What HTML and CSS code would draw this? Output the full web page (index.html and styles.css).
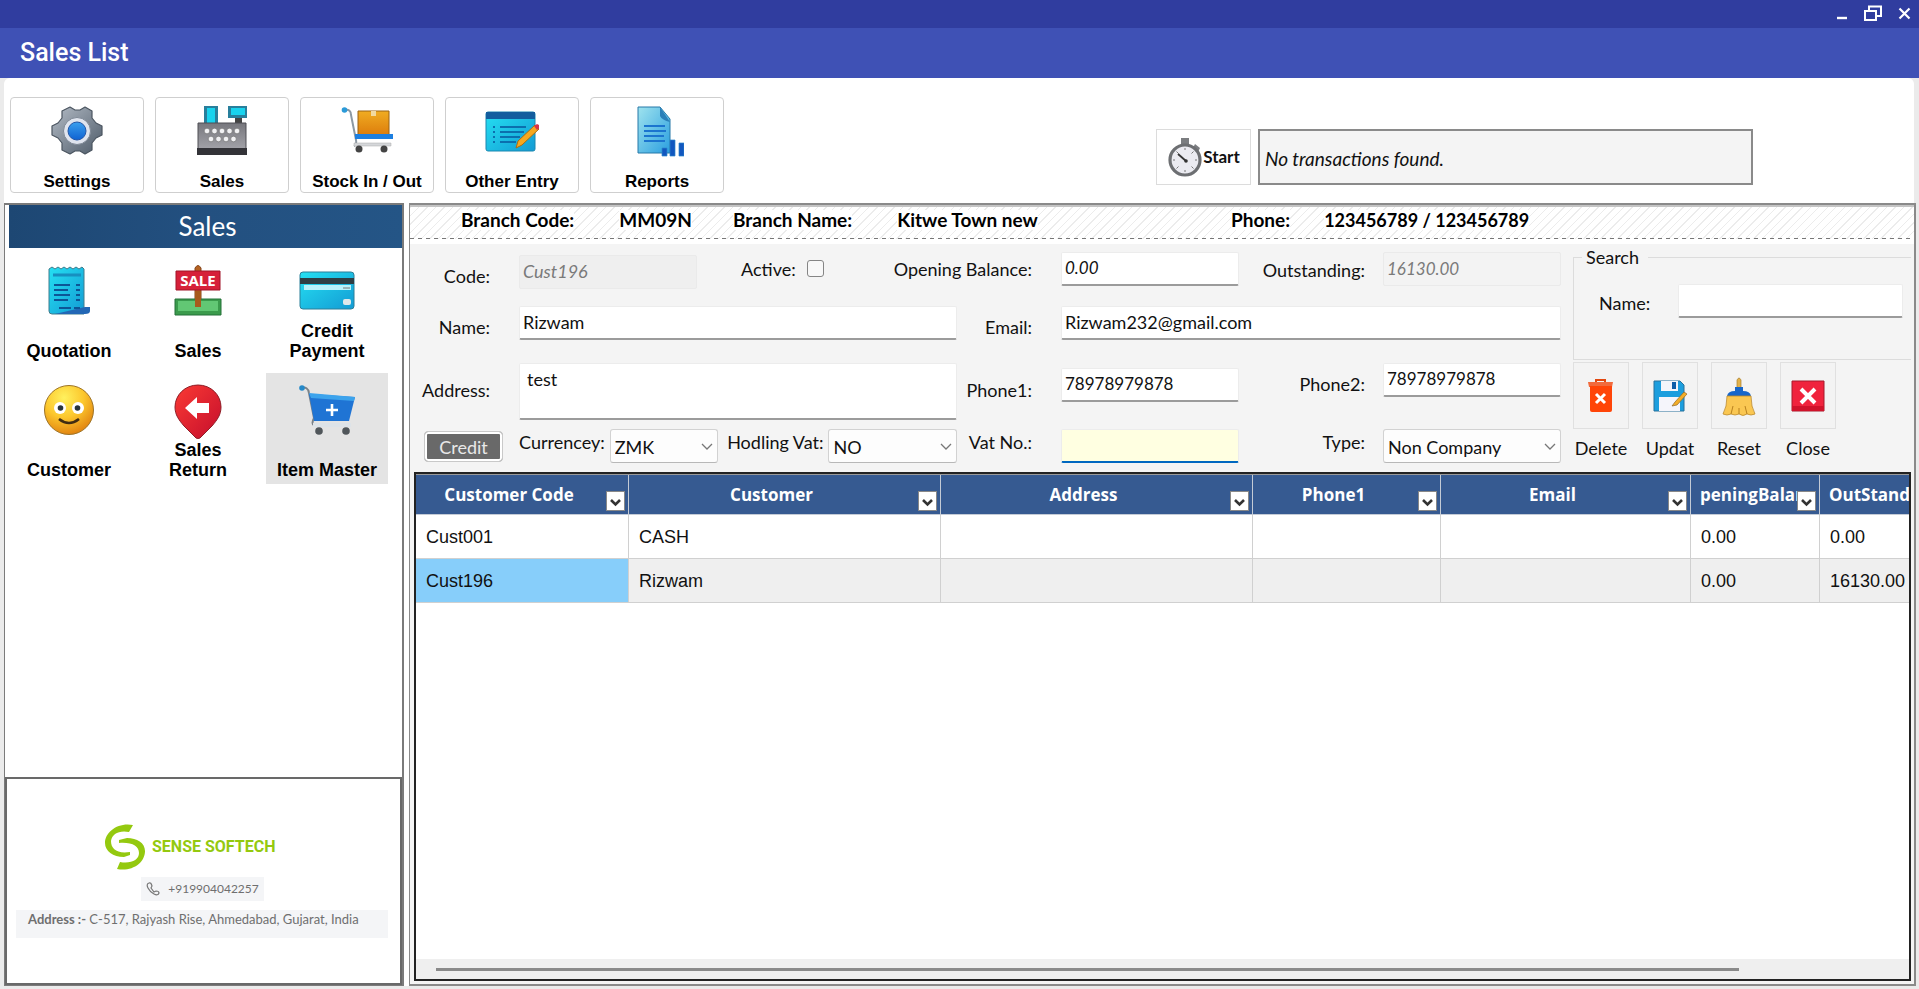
FILE: index.html
```html
<!DOCTYPE html>
<html lang="en">
<head>
<meta charset="utf-8">
<title>Sales List</title>
<link rel="stylesheet" href="styles.css">
</head>
<body>
<svg class="defs" width="0" height="0" aria-hidden="true">
  <defs>
    <linearGradient id="steel" x1="0" y1="0" x2="1" y2="1"><stop offset="0" stop-color="#b4bcc6"/><stop offset="1" stop-color="#4d5a68"/></linearGradient>
    <linearGradient id="till" x1="0" y1="0" x2="0" y2="1"><stop offset="0" stop-color="#77777d"/><stop offset="1" stop-color="#a9a9af"/></linearGradient>
    <linearGradient id="cyan" x1="0" y1="0" x2="1" y2="1"><stop offset="0" stop-color="#25e0f2"/><stop offset="1" stop-color="#139bd4"/></linearGradient>
    <linearGradient id="blue" x1="0" y1="0" x2="0" y2="1"><stop offset="0" stop-color="#3aa0ee"/><stop offset="1" stop-color="#0f62d2"/></linearGradient>
    <linearGradient id="doc" x1="0" y1="0" x2="1" y2="1"><stop offset="0" stop-color="#9fe3ee"/><stop offset="1" stop-color="#2a9fe0"/></linearGradient>
    <linearGradient id="box" x1="0" y1="0" x2="0" y2="1"><stop offset="0" stop-color="#f0ac22"/><stop offset="1" stop-color="#dd7d0c"/></linearGradient>
    <linearGradient id="red" x1="0" y1="0" x2="1" y2="1"><stop offset="0" stop-color="#fb3a34"/><stop offset="1" stop-color="#c40e2c"/></linearGradient>
    <radialGradient id="face" cx=".4" cy=".25" r=".8"><stop offset="0" stop-color="#fff15e"/><stop offset=".5" stop-color="#fcc72d"/><stop offset="1" stop-color="#df7d0d"/></radialGradient>
  </defs>
</svg>

<header class="titlebar">
  <button class="win" type="button" aria-label="Minimize"><svg width="12" height="14" viewBox="0 0 12 14"><path d="M1 12h10" stroke="#fff" stroke-width="2.4"/></svg></button>
  <button class="win" type="button" aria-label="Restore"><svg width="20" height="16" viewBox="0 0 20 16"><path d="M2 6h11v9H2zM6 6V1.5h12V11h-5" fill="none" stroke="#fff" stroke-width="2"/></svg></button>
  <button class="win" type="button" aria-label="Close window"><svg width="13" height="13" viewBox="0 0 13 13"><path d="M1.5 1.5l10 10m0-10l-10 10" stroke="#fff" stroke-width="2.2"/></svg></button>
</header>
<div class="appbar"><h1 class="appbar-title">Sales List</h1></div>

<nav class="toolbar">
  <button class="tool" type="button">
    <svg width="54" height="52" viewBox="0 0 54 52"><g stroke="#4b5560" stroke-width="1.2" stroke-linejoin="round"><path fill="url(#steel)" d="M20 2l5 3h5l5-3 7 4 0 7 4 5 6 3v9l-6 3-4 5 0 7-7 4-5-3h-5l-5 3-8-4 0-7-4-5-6-3v-9l6-3 4-5 0-7z"/></g><circle cx="27" cy="26" r="13.500" fill="#dfe4ee" stroke="#7e8895"/><circle cx="27" cy="26" r="9" fill="url(#blue)" stroke="#2256a8"/></svg>
    <span>Settings</span>
  </button>
  <button class="tool" type="button">
    <svg width="54" height="52" viewBox="0 0 54 52"><path d="M9 1h14v18H9zM33 1h19v12H33z" fill="#287f9c"/><path d="M12 3h8v15h-8zM36 3h14v7H36z" fill="#19d3ee"/><path d="M40 13h7v6h-7z" fill="#444"/><path d="M3 18h48v30H3z" fill="url(#till)" stroke="#4f4f55"/><path d="M2 43h50v7H2z" fill="#333338"/><g fill="#f1f1f3" stroke="#666" stroke-width=".6"><circle cx="12" cy="26" r="2.800"/><circle cx="19.500" cy="26" r="2.800"/><circle cx="27" cy="26" r="2.800"/><circle cx="34.500" cy="26" r="2.800"/><circle cx="42" cy="26" r="2.800"/><circle cx="16" cy="34" r="2.800"/><circle cx="23.500" cy="34" r="2.800"/><circle cx="31" cy="34" r="2.800"/><circle cx="38.500" cy="34" r="2.800"/></g></svg>
    <span>Sales</span>
  </button>
  <button class="tool" type="button">
    <svg width="54" height="52" viewBox="0 0 54 52"><path d="M5 5q6-1 6 5l5 25q1 5-2 6" fill="none" stroke="#8d99a3" stroke-width="2"/><circle cx="4.500" cy="5" r="2.800" fill="#2b9ad8"/><path d="M18 6h31v24H18z" fill="url(#box)" stroke="#9a6212"/><path d="M31 6h5v5h-5z" fill="#f2d9a0"/><path d="M15 29h38v5H15z" fill="#1d7fe0"/><path d="M14 38h37v3H14z" fill="#d5d7da" stroke="#aaa" stroke-width=".5"/><circle cx="19" cy="44" r="3.500" fill="#444"/><circle cx="44" cy="44" r="3.500" fill="#444"/></svg>
    <span>Stock In / Out</span>
  </button>
  <button class="tool" type="button">
    <svg width="54" height="52" viewBox="0 0 54 52"><rect x="1" y="7" width="49" height="39" rx="2" fill="url(#cyan)" stroke="#1a87b0"/><path d="M1 7h49v7H1z" fill="#135d9e"/><path d="M8 22h2m5 0h26M8 27h2m5 0h24M8 32h2m5 0h20M8 37h2m5 0h16" stroke="#0b6fae" stroke-width="2"/><path d="M31 43l2-7 17-16 4 4-17 16z" fill="#f5a81e" stroke="#a86c14"/><path d="M49 21l3-2 2 1 0 3-2 2z" fill="#d8334a"/></svg>
    <span>Other Entry</span>
  </button>
  <button class="tool" type="button">
    <svg width="54" height="52" viewBox="0 0 54 52"><path d="M8 2h22l10 12v34H8z" fill="url(#doc)" stroke="#2779a8"/><path d="M30 2l10 15q-8-2-10-6z" fill="#2b7fb8"/><path d="M14 21h21M14 26h22M14 31h20M14 36h21" stroke="#1b74cf" stroke-width="2.200"/><path d="M32 43h5v8h-5zM40 35h5v16h-5zM49 38h5v13h-5z" fill="#1257bf" stroke="#2b88cd" stroke-width=".7"/></svg>
    <span>Reports</span>
  </button>
  <div class="session">
    <button class="start" type="button">
      <svg width="36" height="40" viewBox="0 0 36 40"><path d="M14 1h8v6h-8zM28 7l5 4-2 4-5-4z" fill="#7b7d80"/><circle cx="18" cy="23" r="15" fill="#ebebf1" stroke="#6d6f72" stroke-width="3.200"/><path d="M18 11v2m0 20v2M6 23h2m20 0h2M9.500 14.500l2 2m13 13l2 2m0-17l-2 2m-13 13l-2 2" stroke="#777"/><path d="M11 17l8 7" stroke="#333" stroke-width="1.800"/><circle cx="19" cy="24" r="1.800" fill="#333"/></svg>
      <span>Start</span>
    </button>
    <input class="status" type="text" value="No transactions found." aria-label="Transaction status" readonly>
  </div>
</nav>

<div class="workspace">
  <aside class="sidebar">
    <h2 class="sidebar-title">Sales</h2>
    <nav class="tiles">
      <button class="tile" type="button">
        <svg width="48" height="52" viewBox="0 0 48 52"><path d="M4 4l3-2 3 2 3-2 3 2 3-2 3 2 3-2 3 2 3-2 3 2 3-2 2 2v45H7q-3 0-3-3z" fill="url(#cyan)" stroke="#3f7c8c"/><path d="M40 42h5v4q0 3-5 3H10" fill="#2367b5"/><path d="M8 10h28" stroke="#178fc0" stroke-width="3"/><path d="M9 20h16M31 20h4M9 25h14M31 25h4M9 30h16M31 30h4M9 35h14M31 35h4M14 43h12M29 43h6" stroke="#0c5596" stroke-width="2"/></svg>
        <span>Quotation</span>
      </button>
      <button class="tile" type="button">
        <svg width="48" height="52" viewBox="0 0 48 52"><path d="M21 3q3-5 6 0v40h-6z" fill="#b66322" stroke="#85451a"/><path d="M1 34h46v16H1z" fill="#3b9b4c" stroke="#257038"/><path d="M4 36h40v10H4z" fill="#62c774"/><path d="M21 26h6v16h-6z" fill="#a75a1c"/><path d="M2 6h44v19H2z" fill="#d62039" stroke="#a11528"/><text x="24" y="21" class="sale-sign">SALE</text></svg>
        <span>Sales</span>
      </button>
      <button class="tile" type="button">
        <svg width="60" height="52" viewBox="0 0 60 52"><rect x="3" y="7" width="54" height="37" rx="3" fill="url(#cyan)" stroke="#2a7e98"/><path d="M3 13h54v6H3z" fill="#2e3e44"/><path d="M7 20h47v5H7z" fill="#b9f1fa"/><path d="M46 23h7" stroke="#777"/><rect x="46" y="34" width="8" height="6" rx="2" fill="#dfe8ea"/></svg>
        <span>Credit Payment</span>
      </button>
      <button class="tile" type="button">
        <svg width="52" height="52" viewBox="0 0 52 52"><circle cx="26" cy="26" r="24.500" fill="url(#face)" stroke="#9d7428"/><circle cx="17" cy="24" r="6" fill="#fff"/><circle cx="35" cy="24" r="6" fill="#fff"/><circle cx="17.500" cy="24" r="2.800" fill="#28343c"/><circle cx="34.500" cy="24" r="2.800" fill="#28343c"/><path d="M16 35q10 8 20 0" fill="none" stroke="#402c12" stroke-width="2.600"/></svg>
        <span>Customer</span>
      </button>
      <button class="tile" type="button">
        <svg width="48" height="56" viewBox="0 0 48 56"><path d="M24 1c13 0 23 10 23 22 0 8-4 13-9 19L26 54q-2 1-4 0L10 42C5 36 1 31 1 23 1 11 11 1 24 1z" fill="url(#red)" stroke="#8f2029"/><path d="M11 24l12-11v6h12v10H23v6z" fill="#fff"/></svg>
        <span>Sales Return</span>
      </button>
      <button class="tile is-active" type="button">
        <svg width="58" height="52" viewBox="0 0 58 52"><path d="M3 4q7-2 8 5l5 25q-3 6 0 7" fill="none" stroke="#7b8288" stroke-width="2"/><circle cx="4" cy="4" r="2.800" fill="#2589c9"/><path d="M11 10l46 3-6 24H16z" fill="#1f74d4"/><path d="M11 9l46 4-1 4-43-3z" fill="#3ca3ec"/><path d="M34 20v12m-6-6h12" stroke="#fff" stroke-width="2.600"/><path d="M15 39h38v4H15z" fill="#dde3e8"/><circle cx="21" cy="47" r="3.800" fill="#50565a"/><circle cx="48" cy="47" r="3.800" fill="#50565a"/></svg>
        <span>Item Master</span>
      </button>
    </nav>
    <footer class="vendor">
      <div class="brand">
        <svg width="42" height="46" viewBox="0 0 42 46"><path d="M29 1C14-2 1 8 1 19c0 8 8 14 19 14l6-2v-3C13 30 7 25 7 17 8 10 15 6 25 8zM13 45c15 3 28-6 28-18 0-8-8-13-18-13l-8 2v3c13-1 20 3 20 10 0 7-8 11-19 9z" fill="#94c90f"/></svg>
        <span class="brand-name">SENSE SOFTECH</span>
      </div>
      <p class="vendor-phone"><svg width="14" height="14" viewBox="0 0 14 14"><path d="M3 1Q0 2 2 6t6 6q4 2 5-1 0-2-3-2l-2 1-3-4 1-2Q5 0 3 1z" fill="none" stroke="#777" stroke-width="1.200"/></svg>+919904042257</p>
      <p class="vendor-address"><b>Address :-</b> C-517, Rajyash Rise, Ahmedabad, Gujarat, India</p>
    </footer>
  </aside>

  <main class="panel">
    <dl class="branch">
      <div class="branch-item branch-code"><dt>Branch Code:</dt><dd>MM09N</dd></div>
      <div class="branch-item branch-name"><dt>Branch Name:</dt><dd>Kitwe Town new</dd></div>
      <div class="branch-item branch-phone"><dt>Phone:</dt><dd>123456789 / 123456789</dd></div>
    </dl>

    <form class="entry">
      <div class="fields">
        <div class="row">
          <label class="lead low end" for="code">Code:</label>
          <div class="span-label cluster">
            <input class="box short end" id="code" type="text" value="Cust196" disabled>
            <label class="active-label" for="active">Active:</label><input class="check" id="active" type="checkbox">
            <label class="opening" for="opening">Opening Balance:</label>
          </div>
          <input class="box num italic" id="opening" type="text" value="0.00">
          <label class="tail" for="outstanding">Outstanding:</label>
          <input class="box num pale" id="outstanding" type="text" value="16130.00" disabled>
        </div>
        <div class="row">
          <label class="lead low" for="name">Name:</label>
          <input class="box" id="name" type="text" value="Rizwam">
          <label class="lead low" for="email">Email:</label>
          <input class="box wide" id="email" type="email" value="Rizwam232@gmail.com">
        </div>
        <div class="row row-address">
          <label class="lead" for="address">Address:</label>
          <textarea class="box area" id="address">test</textarea>
          <label class="lead" for="phone1">Phone1:</label>
          <input class="box num dropped" id="phone1" type="text" value="78978979878">
          <label class="tail top" for="phone2">Phone2:</label>
          <input class="box num" id="phone2" type="text" value="78978979878">
        </div>
        <div class="row row-last">
          <button class="credit" type="button">Credit</button>
          <div class="selects">
            <label class="high" for="currency">Currencey:</label>
            <div class="select select-s"><select id="currency"><option>ZMK</option></select><svg width="12" height="8" viewBox="0 0 12 8"><path d="M1 1l5 5 5-5" fill="none" stroke="#777" stroke-width="1.300"/></svg></div>
            <label class="high" for="vat">Hodling Vat:</label>
            <div class="select"><select id="vat"><option>NO</option></select><svg width="12" height="8" viewBox="0 0 12 8"><path d="M1 1l5 5 5-5" fill="none" stroke="#777" stroke-width="1.300"/></svg></div>
          </div>
          <label class="lead high" for="vatno">Vat No.:</label>
          <input class="box focused" id="vatno" type="text">
          <label class="tail high" for="type">Type:</label>
          <div class="select"><select id="type"><option>Non Company</option></select><svg width="12" height="8" viewBox="0 0 12 8"><path d="M1 1l5 5 5-5" fill="none" stroke="#777" stroke-width="1.300"/></svg></div>
        </div>
      </div>

      <div class="side">
        <fieldset class="search">
          <legend>Search</legend>
          <label for="search">Name:</label>
          <input class="box" id="search" type="text">
        </fieldset>
        <div class="actions">
          <div class="action"><button type="button" aria-labelledby="a1"><svg width="30" height="36" viewBox="0 0 30 36"><path d="M10 4V2h9v2" fill="none" stroke="#e3470f" stroke-width="2"/><path d="M2 4h25l-1 5H3z" fill="#f26a3c"/><path d="M4 8h22v24q0 2-2 2H6q-2 0-2-2z" fill="#ff4508"/><path d="M10 16l9 9m0-9l-9 9" stroke="#fff" stroke-width="3"/></svg></button><span id="a1">Delete</span></div>
          <div class="action"><button type="button" aria-labelledby="a2"><svg width="36" height="34" viewBox="0 0 36 34"><path d="M2 2h26l4 4v26H2z" fill="#1c9ede" stroke="#27719b"/><path d="M9 2h17v10H9z" fill="#f4f6fa"/><path d="M20 3h4v7h-4z" fill="#0d5ea8"/><path d="M7 18h21v14H7z" fill="#f5f5fb"/><path d="M20 27l3-4 9-10 3 2-10 11z" fill="#f3ad28" stroke="#8f682a" stroke-width=".7"/></svg></button><span id="a2">Updat</span></div>
          <div class="action"><button type="button" aria-labelledby="a3"><svg width="34" height="40" viewBox="0 0 34 40"><path d="M15 12V4q2-4 4 0v8z" fill="#e2b24b" stroke="#a97e2e" stroke-width=".7"/><path d="M5 20q1-5 8-5v-4h8v4q7 0 8 5z" fill="#1766c9"/><path d="M5 20h24q0 11 4 18-4 2-8 0-4 3-8 0-4 2-8 0-4 2-8 0 4-7 4-18z" fill="#fac752" stroke="#bd8a2c" stroke-width=".8"/><path d="M11 30l-2 8M17 32v6M23 30l2 8" stroke="#b9821f"/></svg></button><span id="a3">Reset</span></div>
          <div class="action"><button type="button" aria-labelledby="a4"><svg width="34" height="34" viewBox="0 0 34 34"><path d="M1 2h32v30H1z" fill="#f0233d" stroke="#a51b2c"/><path d="M1 27h32v5H1z" fill="#d0132b"/><path d="M10 10l14 14m0-14L10 24" stroke="#fff" stroke-width="4"/></svg></button><span id="a4">Close</span></div>
        </div>
      </div>
    </form>

    <section class="grid">
      <div class="grid-view">
        <table class="customers">
          <colgroup><col class="c-code"><col class="c-name"><col class="c-name"><col class="c-phone"><col class="c-email"><col class="c-open"><col></colgroup>
          <thead>
            <tr>
              <th>Customer Code<button class="filter" type="button" aria-label="Filter code"><svg width="11" height="8" viewBox="0 0 11 8"><path d="M1 1l4.500 4.500L10 1" fill="none" stroke="#333" stroke-width="2.600"/></svg></button></th>
              <th>Customer<button class="filter" type="button" aria-label="Filter customer"><svg width="11" height="8" viewBox="0 0 11 8"><path d="M1 1l4.500 4.500L10 1" fill="none" stroke="#333" stroke-width="2.600"/></svg></button></th>
              <th>Address<button class="filter" type="button" aria-label="Filter address"><svg width="11" height="8" viewBox="0 0 11 8"><path d="M1 1l4.500 4.500L10 1" fill="none" stroke="#333" stroke-width="2.600"/></svg></button></th>
              <th>Phone1<button class="filter" type="button" aria-label="Filter phone"><svg width="11" height="8" viewBox="0 0 11 8"><path d="M1 1l4.500 4.500L10 1" fill="none" stroke="#333" stroke-width="2.600"/></svg></button></th>
              <th>Email<button class="filter" type="button" aria-label="Filter email"><svg width="11" height="8" viewBox="0 0 11 8"><path d="M1 1l4.500 4.500L10 1" fill="none" stroke="#333" stroke-width="2.600"/></svg></button></th>
              <th class="cut">peningBalan<button class="filter" type="button" aria-label="Filter opening balance"><svg width="11" height="8" viewBox="0 0 11 8"><path d="M1 1l4.500 4.500L10 1" fill="none" stroke="#333" stroke-width="2.600"/></svg></button></th>
              <th class="cut">OutStand</th>
            </tr>
          </thead>
          <tbody>
            <tr><td>Cust001</td><td>CASH</td><td></td><td></td><td></td><td>0.00</td><td>0.00</td></tr>
            <tr class="alt"><td class="current">Cust196</td><td>Rizwam</td><td></td><td></td><td></td><td>0.00</td><td>16130.00</td></tr>
          </tbody>
        </table>
      </div>
      <div class="scrollbar"><div class="thumb"></div></div>
    </section>
  </main>
</div>
</body>
</html>
```
FILE: styles.css
```css
* { box-sizing: border-box; }

body {
  margin: 0;
  min-height: 100vh;
  display: flex;
  flex-direction: column;
  background: #ebebeb;
  color: #111;
  font: 18px/20px Lato, "Open Sans", sans-serif;
}

button, input, select, textarea { font: inherit; color: inherit; }
button { padding: 0; }
.defs { position: absolute; }

/* Window chrome */
.titlebar {
  height: 28px;
  padding: 2px 8px 4px 0;
  display: flex;
  justify-content: flex-end;
  gap: 15px;
  background: #303d9f;
}
.win { display: flex; align-items: center; border: 0; background: none; }
.appbar {
  height: 50px;
  padding-left: 20px;
  display: flex;
  align-items: center;
  background: #3f51b5;
}
.appbar-title { margin: 0; color: #fff; font: 500 25px/30px Roboto, sans-serif; }

/* Toolbar */
.toolbar {
  margin: 0 5px 0 4px;
  padding: 19px 161px 10px 6px;
  display: flex;
  gap: 11px;
  background: #fff;
  border-radius: 6px 6px 0 0;
}
.tool {
  width: 134px;
  height: 96px;
  padding: 7px 0 0;
  display: flex;
  flex-direction: column;
  align-items: center;
  justify-content: space-between;
  border: 1px solid #cfcfcf;
  border-radius: 4px;
  background: #fff;
  color: #000;
  font: bold 17px/20px "Liberation Sans", Arial, sans-serif;
}
.session { margin-left: auto; display: flex; gap: 7px; padding: 32px 0 8px; }
.start {
  width: 95px;
  height: 56px;
  display: flex;
  align-items: center;
  justify-content: center;
  border: 1px solid #dcdcdc;
  background: #fff;
  font-weight: bold;
  font-size: 17px;
}
.status {
  width: 495px;
  height: 56px;
  padding: 2px 5px 0;
  border: 2px solid #8a8a8a;
  background: #f4f4f4;
  font-size: 19px;
  font-style: italic;
}

/* Body */
.workspace {
  flex: 1;
  margin: 0 3px 3px 4px;
  display: flex;
  gap: 5px;
  background: #fff;
}
.sidebar {
  width: 400px;
  display: flex;
  flex-direction: column;
  border: 1px solid #7b7b7b;
  border-width: 2px 2px 1px;
  border-left-width: 1px;
}
.sidebar-title {
  margin: 0 0 0 4px;
  padding-left: 4px;
  height: 43px;
  background: linear-gradient(90deg, #1d4773, #235080 50%, #245586);
  color: #fff;
  font: 26px/43px Lato, sans-serif;
  text-align: center;
}
.tiles {
  padding: 6px 3px;
  display: grid;
  grid-template-columns: repeat(3, 122px);
  gap: 8px 7px;
}
.tile {
  height: 111px;
  padding: 11px 4px 4px;
  display: flex;
  flex-direction: column;
  align-items: center;
  justify-content: space-between;
  border: 0;
  background: none;
  color: #000;
  font: bold 18px/20px "Liberation Sans", Arial, sans-serif;
}
.tile span { max-width: 104px; }
.tile svg { flex: none; margin-bottom: -10px; }
.tile.is-active { background: #e4e4e4; }
.sale-sign { fill: #fff; font: bold 15px "Open Sans", sans-serif; text-anchor: middle; }
.vendor {
  margin-top: auto;
  height: 208px;
  padding: 45px 12px 0 9px;
  border: 2px solid #696969;
}
.brand { padding-left: 88px; display: flex; align-items: center; gap: 6px; }
.brand-name { color: #94c90f; font: bold 16px/24px Roboto, sans-serif; }
.vendor-phone {
  margin: 7px 0 9px 125px;
  width: 123px;
  height: 24px;
  display: flex;
  align-items: center;
  justify-content: center;
  gap: 8px;
  background: #f4f5f7;
  color: #6f6f6f;
  font-size: 12px;
}
.vendor-address {
  margin: 0;
  height: 28px;
  padding-left: 12px;
  background: #f4f5f7;
  color: #6f6f6f;
  font-size: 13px;
  line-height: 18px;
}

.panel {
  flex: 1;
  min-width: 0;
  display: flex;
  flex-direction: column;
  padding: 0 3px 3px 0;
  border: 2px solid #8a8a8a;
  border-left-width: 1px;
  background: #f4f4f4;
}
.branch {
  margin: 0 -3px 0 0;
  height: 39px;
  padding: 3px 0 0 51px;
  display: flex;
  border-top: 2px solid #c4c4c4;
  background:
    repeating-linear-gradient(90deg, #777 0 4px, transparent 4px 8px) 0 31px / 100% 1px no-repeat,
    linear-gradient(#fff, #fff) 0 32px / 100% 6px no-repeat,
    repeating-linear-gradient(135deg, #ececec 0 1px, #fff 1px 6px);
  color: #000;
  font-size: 19px;
  font-weight: bold;
}
.branch-item { display: flex; gap: 45px; }
.branch-code { width: 272px; }
.branch-name { width: 498px; }
.branch-phone { gap: 34px; }
.branch-phone dd { font-size: 18px; }
.branch-item dt, .branch-item dd { margin: 0; height: 20px; background: #fff; white-space: nowrap; }

/* Entry form */
.entry { display: flex; gap: 12px; padding: 8px 0 9px; }
.fields { flex: 1; min-width: 0; }
.row {
  display: grid;
  grid-template-columns: 109px minmax(0, 438fr) 104px minmax(0, 178fr) 144px minmax(0, 178fr);
  align-items: start;
  min-height: 37px;
  margin-bottom: 17px;
}
.row:nth-child(2) { min-height: 33px; margin-bottom: 23px; }
.row label { white-space: nowrap; }
.lead { padding-right: 29px; text-align: right; align-self: center; }
.tail { padding: 8px 18px 0 0; text-align: right; }
.low { padding-top: 7px; }
.high { padding-top: 3px; align-self: start; }
.end { align-self: end; }
.lead.end { padding-bottom: 3px; }
.row .top { padding-top: 11px; }
.span-label { grid-column: span 2; }
.wide { grid-column: span 3; }
.cluster { display: flex; align-items: flex-start; align-self: stretch; }
.box {
  width: 100%;
  min-width: 0;
  height: 34px;
  padding: 0 3px 2px;
  border: 1px solid #ececec;
  border-bottom: 2px solid #9b9b9b;
  border-radius: 2px;
  background: #fff;
}
.box.num { font-size: 17px; }
.box:disabled { border: 1px solid #eaeaea; background: #efefef; color: #7a7a7a; font-style: italic; }
.box.pale:disabled { background: #f3f3f3; }
.short { width: 178px; }
.italic { font-style: italic; }
.dropped { margin-top: 5px; }
.active-label { margin: 7px 11px 0 44px; }
.check {
  appearance: none;
  width: 17px;
  height: 17px;
  margin: 8px 0 0;
  border: 1px solid #858585;
  border-radius: 3px;
  background: #f8f8f8;
}
.opening { margin: 7px 0 0 auto; padding-right: 29px; }
.row-address { margin-bottom: 9px; }
.row-address .lead { padding-bottom: 4px; }
.area { display: block; height: 57px; padding: 5px 7px; resize: none; overflow: hidden; }
.row-last { min-height: 34px; margin-bottom: 0; }
.credit {
  width: 79px;
  height: 31px;
  margin: 2px 0 0 14px;
  border: 1px solid #c9c9c9;
  border-radius: 4px;
  background: #696969;
  box-shadow: inset 0 0 0 2px #fff;
  color: #e8e8e8;
}
.selects { display: flex; gap: 5px; align-items: flex-start; }
.select { position: relative; flex: 128; min-width: 0; }
.select-s { flex: 108; margin-right: 4px; }
.select select {
  display: block;
  width: 100%;
  height: 34px;
  padding: 2px 4px 0;
  appearance: none;
  border: 1px solid #d2d2d2;
  border-bottom-color: #b8b8b8;
  border-radius: 3px;
  background: #fdfdfd;
}
.select svg { position: absolute; right: 5px; top: 14px; pointer-events: none; }
.focused { border-bottom-color: #0067c0; background: #ffffe1; }

.side { width: 338px; }
.search {
  margin: -5px 0 2px;
  height: 113px;
  padding: 17px 8px 0 25px;
  display: flex;
  align-items: flex-start;
  border: 1px solid #dcdcdc;
  border-right: 0;
}
.search legend { margin-left: -17px; padding: 0 9px 0 4px; }
.search label { width: 79px; flex: none; padding-top: 9px; }
.actions { display: flex; gap: 13px; }
.action { width: 56px; text-align: center; }
.action button {
  width: 56px;
  height: 67px;
  margin-bottom: 9px;
  display: flex;
  align-items: center;
  justify-content: center;
  border: 1px solid #e0e0e0;
  background: #f3f3f3;
}

/* Customer grid */
.grid {
  flex: 1;
  min-height: 0;
  margin: 0 0 0 4px;
  display: flex;
  flex-direction: column;
  border: 2px solid #222;
  background: #fff;
}
.grid-view { flex: 1; overflow: hidden; border-top: 1px solid #999; }
.customers { width: 100%; table-layout: fixed; border-collapse: separate; border-spacing: 0; }
.c-code { width: 213px; }
.c-name { width: 312px; }
.c-phone { width: 188px; }
.c-email { width: 250px; }
.c-open { width: 129px; }
.customers th {
  position: relative;
  height: 40px;
  padding: 0 26px 0 0;
  overflow: hidden;
  border-right: 1px solid #c4cbd6;
  border-bottom: 1px solid #c4cbd6;
  background: #365a91;
  color: #fff;
  font: bold 17px/20px "Open Sans", "Noto Sans", sans-serif;
  white-space: nowrap;
}
.customers th.cut { padding: 0 0 0 9px; text-align: left; }
.customers td {
  height: 44px;
  padding: 0 10px;
  border-right: 1px solid #d0d0d0;
  border-bottom: 1px solid #d0d0d0;
  font: 18px/20px "Liberation Sans", Arial, sans-serif;
  white-space: nowrap;
}
.customers td:last-child { padding-right: 0; }
.customers th:last-child, .customers td:last-child { border-right: 0; }
.customers .alt td { background: #efefef; }
.customers .alt .current { background: #87cefa; }
.filter {
  position: absolute;
  right: 3px;
  bottom: 3px;
  width: 19px;
  height: 20px;
  display: flex;
  align-items: center;
  justify-content: center;
  padding-top: 3px;
  border: 1px solid #888;
  background: #fff;
}
.scrollbar { height: 20px; padding: 9px 170px 0 20px; background: #efefef; }
.thumb { height: 3px; background: #8a8a8a; }
```
